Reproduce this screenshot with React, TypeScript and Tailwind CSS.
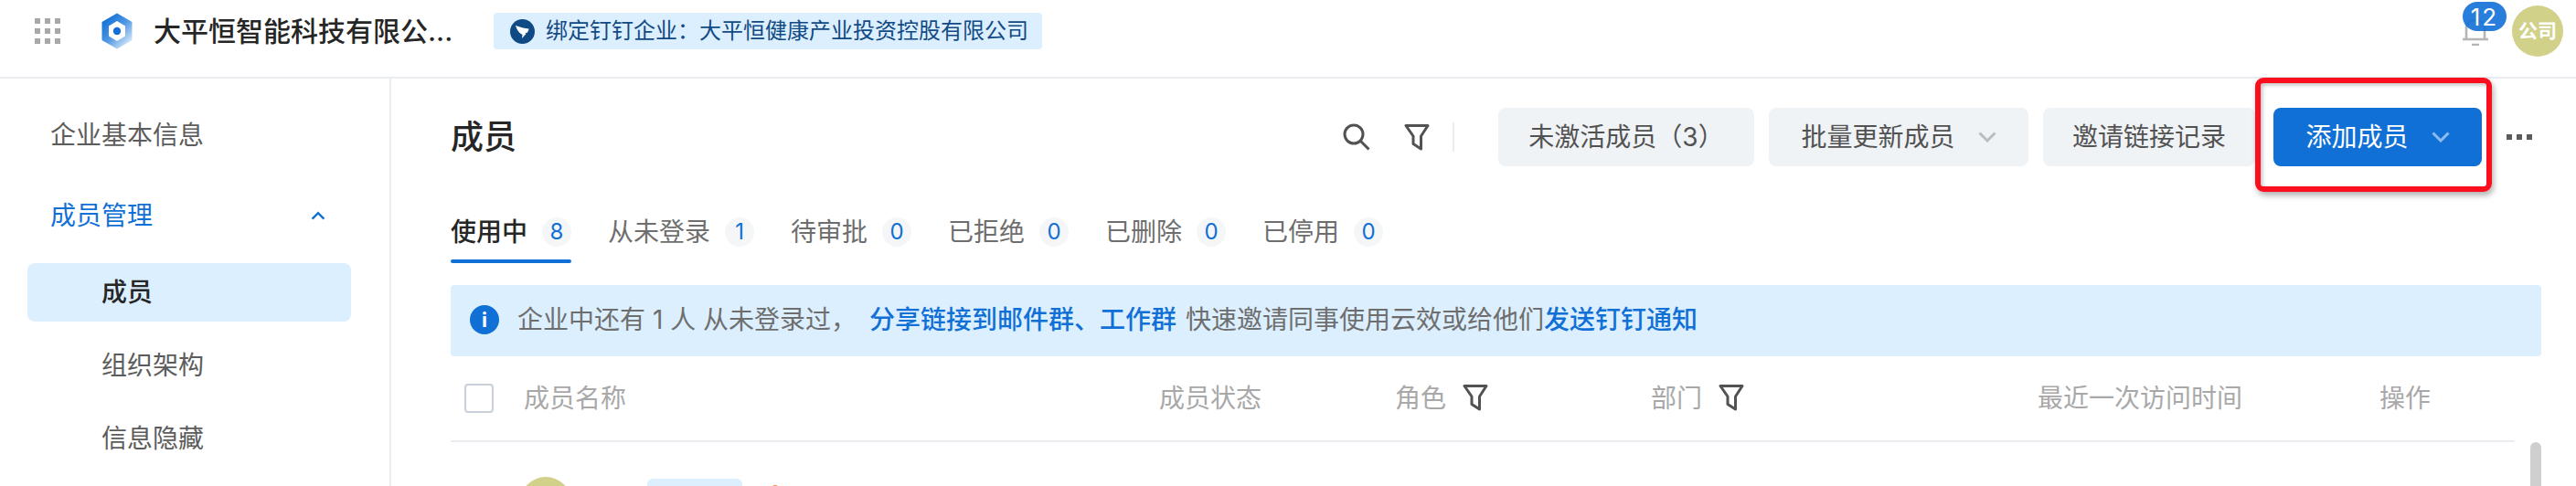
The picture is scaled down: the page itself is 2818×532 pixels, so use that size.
import React from "react";

const font = "font-['Inter','Noto_Sans_CJK_SC',sans-serif]";

function Chevron({ className = "", up = false }: { className?: string; up?: boolean }) {
  return (
    <svg width="20" height="12" viewBox="0 0 20 12" className={className} fill="none" stroke="currentColor" strokeWidth="3">
      <path d={up ? "M2 10.5 L10 2.5 L18 10.5" : "M1.5 1.5 L10 10 L18.5 1.5"} />
    </svg>
  );
}

function Funnel({ className = "" }: { className?: string }) {
  return (
    <svg width="28" height="30" viewBox="0 0 28 30" className={className} fill="none" stroke="currentColor" strokeWidth="3" strokeLinejoin="round">
      <path d="M2 2.5 H26 L18.5 14 V28 L10 22.5 V14 Z" />
    </svg>
  );
}

function Tab({ label, count, active }: { label: string; count: string; active?: boolean }) {
  return (
    <div className={"relative flex h-[68px] items-center " + (active ? "font-medium text-[#262626]" : "text-[#6e6e6e]")}>
      <span className="text-[28px] leading-[40px]">{label}</span>
      <span className="ml-[16px] flex h-[32px] w-[32px] items-center justify-center rounded-full bg-[#f5f6f8] text-[24px] font-normal text-[#1170d6]">{count}</span>
      {active && <span className="absolute bottom-0 left-0 h-[4px] w-full rounded-sm bg-[#1170d6]" />}
    </div>
  );
}

function GrayButton({ label, caret, width }: { label: string; caret?: boolean; width: string }) {
  return (
    <div className={"flex h-[64px] items-center justify-center gap-[25px] rounded-[8px] bg-[#f0f3f6] text-[28px] text-[#525252] " + width}>
      <span>{label}</span>
      {caret && <Chevron className="text-[#b8bdc2]" />}
    </div>
  );
}

function Th({ label, width, filter }: { label: string; width: string; filter?: boolean }) {
  return (
    <div className={"flex items-center gap-[18px] " + width}>
      <span className="text-[28px] text-[#a8a8a8]">{label}</span>
      {filter && <Funnel className="-mt-[2px] text-[#525252]" />}
    </div>
  );
}

export default function App() {
  return (
    <div className={"flex h-[532px] w-[2818px] flex-col overflow-hidden bg-white " + font}>
      <header className="flex h-[86px] shrink-0 items-center border-b-2 border-[#e9ecf0] pb-[16px] pl-[38px] pr-[14px]">
        <div className="grid w-[28px] grid-cols-3 gap-[5px]">
          {Array.from({ length: 9 }).map((_, i) => (
            <span key={i} className="h-[6px] w-[6px] bg-[#a8a8a8]" />
          ))}
        </div>
        <svg width="34" height="40" viewBox="0 0 34 40" className="ml-[45px]">
          <defs>
            <linearGradient id="hexFill" x1="0.15" y1="0.1" x2="0.85" y2="0.9">
              <stop offset="0" stopColor="#1170d6" />
              <stop offset="0.5" stopColor="#4f97e4" />
              <stop offset="1" stopColor="#d3e6f9" />
            </linearGradient>
          </defs>
          <path d="M17 0.5 L33.5 10 V30 L17 39.5 L0.5 30 V10 Z" fill="url(#hexFill)" />
          <path d="M17 9 L26 14.5 V25.5 L17 31 L8 25.5 V14.5 Z" fill="white" />
          <circle cx="17" cy="20" r="4.2" fill="#1170d6" />
        </svg>
        <div className="ml-[23px] w-[325px] whitespace-nowrap text-[30px] font-medium text-[#262626]">大平恒智能科技有限公...</div>
        <div className="ml-[47px] flex h-[40px] w-[600px] items-center gap-[12px] rounded-[4px] bg-[#dceffe] pl-[18px] text-[24px] text-[#114a84]">
          <span className="flex h-[27px] w-[27px] items-center justify-center rounded-full bg-[#0f4a85]">
            <svg width="17" height="17" viewBox="0 0 17 17">
              <path d="M1 2 C5 3.5 11 5 15.5 5.5 C15.5 7 14.5 8.5 13.5 10 L11.5 10 L12.5 11 L8 16 L8.5 12 C5 10.5 2.5 7 1 2 Z" fill="white" />
            </svg>
          </span>
          <span className="whitespace-nowrap">绑定钉钉企业：大平恒健康产业投资控股有限公司</span>
        </div>
        <div className="ml-auto flex items-center">
          <div className="relative h-[56px] w-[28px]">
            <svg width="28" height="30" viewBox="0 0 28 30" className="absolute left-0 top-[14px]" fill="none" stroke="#b5b5b5" strokeWidth="2.6">
              <path d="M4 22 V11 C4 5 9 2 14 2 C19 2 24 5 24 11 V22 M0 23 H28 M10 29 H18" />
            </svg>
            <span className="absolute left-0 top-[-4px] flex h-[32px] w-[48px] items-center justify-center rounded-full bg-[#1170d6]/90 text-[26px] tracking-[2px] text-white">12</span>
          </div>
          <span className="ml-[26px] flex h-[56px] w-[56px] items-center justify-center rounded-full bg-[#d1d18a] text-[21px] font-bold text-white">公司</span>
        </div>
      </header>
      <div className="flex min-h-0 flex-1">
        <aside className="flex w-[428px] shrink-0 flex-col border-r-2 border-[#e9ecf0] pl-[30px] pr-[42px] pt-[30px]">
          <div className="flex h-[64px] items-center pl-[25px] text-[28px] text-[#5c5c5c]">企业基本信息</div>
          <div className="mt-[24px] flex h-[64px] items-center justify-between pl-[25px] pr-[28px] text-[28px] text-[#1170d6]">
            <span>成员管理</span>
            <Chevron up className="h-[10px] w-[16px]" />
          </div>
          <div className="mt-[20px] flex h-[64px] items-center rounded-[8px] bg-[#dceffe] pl-[81px] text-[28px] font-medium text-[#262626]">成员</div>
          <div className="mt-[16px] flex h-[64px] items-center pl-[81px] text-[28px] text-[#5c5c5c]">组织架构</div>
          <div className="mt-[16px] flex h-[64px] items-center pl-[81px] text-[28px] text-[#5c5c5c]">信息隐藏</div>
        </aside>
        <main className="flex min-w-0 flex-1 flex-col pl-[65px] pr-[38px]">
          <div className="mt-[32px] flex h-[64px] shrink-0 items-center pr-[10px]">
            <h1 className="text-[36px] font-medium text-[#262626]">成员</h1>
            <div className="ml-auto flex items-center">
              <svg width="30" height="30" viewBox="0 0 30 30" fill="none" stroke="#525252" strokeWidth="3">
                <circle cx="12" cy="12" r="10" />
                <path d="M19 19 L28.5 28.5" />
              </svg>
              <Funnel className="ml-[37px] text-[#525252]" />
              <span className="ml-[25px] h-[32px] w-[2px] bg-[#e9ecf0]" />
              <div className="ml-[48px] flex items-center gap-[16px]">
                <GrayButton label="未激活成员（3）" width="w-[280px]" />
                <GrayButton label="批量更新成员" caret width="w-[284px]" />
                <GrayButton label="邀请链接记录" width="w-[232px]" />
              </div>
              <div className="relative ml-[20px]">
                <div className="flex h-[64px] w-[228px] items-center justify-center gap-[25px] rounded-[8px] bg-[#1170d6] text-[28px] text-white">
                  <span>添加成员</span>
                  <Chevron className="text-[#8ebbec]" />
                </div>
                <div className="absolute -bottom-[28px] -left-[20px] -right-[11px] -top-[33px] rounded-[9px] border-[6px] border-[#fb0f1e] shadow-[2px_4px_6px_rgba(0,0,0,0.3),inset_2px_2px_4px_rgba(0,0,0,0.25)]" />
              </div>
              <div className="ml-[27px] flex gap-[5px]">
                <span className="h-[6px] w-[6px] bg-[#5c5c5c]" />
                <span className="h-[6px] w-[6px] bg-[#5c5c5c]" />
                <span className="h-[6px] w-[6px] bg-[#5c5c5c]" />
              </div>
            </div>
          </div>
          <div className="mt-[38px] flex shrink-0 gap-[40px]">
            <Tab label="使用中" count="8" active />
            <Tab label="从未登录" count="1" />
            <Tab label="待审批" count="0" />
            <Tab label="已拒绝" count="0" />
            <Tab label="已删除" count="0" />
            <Tab label="已停用" count="0" />
          </div>
          <div className="mt-[24px] flex h-[78px] shrink-0 items-center rounded-[4px] bg-[#dceffe] pb-[2px] pl-[21px] text-[28px] text-[#6e6e6e]">
            <span className="flex h-[32px] w-[32px] items-center justify-center rounded-full bg-[#1170d6] text-[22px] font-bold text-white">i</span>
            <span className="ml-[20px] w-[385px] whitespace-pre">企业中还有 1 人 从未登录过，</span>
            <span className="font-medium text-[#1170d6]">分享链接到邮件群、工作群</span>
            <span className="ml-[10px]">快速邀请同事使用云效或给他们</span>
            <span className="font-medium text-[#1170d6]">发送钉钉通知</span>
          </div>
          <div className="mr-[29px] flex h-[94px] shrink-0 items-center border-b-2 border-[#e9ecf0] pl-[15px]">
            <span className="h-[32px] w-[32px] rounded-[4px] border-2 border-[#c9d0d9]" />
            <div className="ml-[33px] flex flex-1 items-center">
              <Th label="成员名称" width="w-[695px]" />
              <Th label="成员状态" width="w-[258px]" />
              <Th label="角色" filter width="w-[280px]" />
              <Th label="部门" filter width="w-[423px]" />
              <Th label="最近一次访问时间" width="w-[374px]" />
              <Th label="操作" width="w-[60px]" />
            </div>
          </div>
          <div className="relative flex-1">
            <div className="ml-[76px] mt-[38px] flex items-start">
              <span className="h-[56px] w-[56px] shrink-0 rounded-full bg-[#d1d18a]" />
              <span className="ml-[83px] mt-[2px] h-[40px] w-[104px] shrink-0 rounded-[6px] bg-[#dceffe]" />
              <span className="ml-[31px] mt-[9px] h-[10px] w-[10px] shrink-0 rounded-full bg-[#f08a3c]" />
            </div>
            <div className="absolute bottom-0 right-0 top-0 w-[12px] rounded-t-full bg-[#cfcfcf]" />
          </div>
        </main>
      </div>
    </div>
  );
}
